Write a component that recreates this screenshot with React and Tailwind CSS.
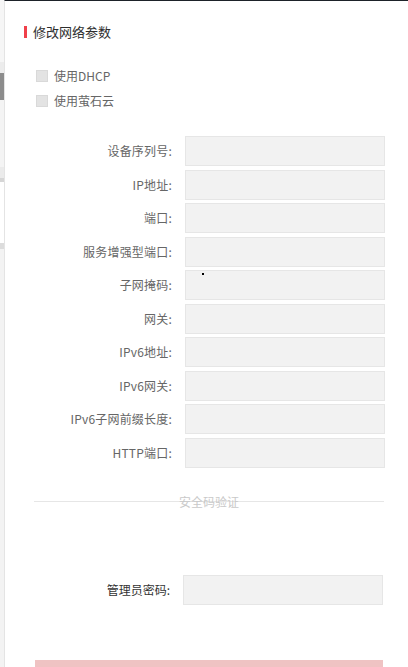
import { useState } from 'react';

const fields = [
  '设备序列号',
  'IP地址',
  '端口',
  '服务增强型端口',
  '子网掩码',
  '网关',
  'IPv6地址',
  'IPv6网关',
  'IPv6子网前缀长度',
  'HTTP端口',
];

function Check({ label, checked, onChange }) {
  return (
    <label className="flex items-center h-[24px] gap-[6px] cursor-pointer">
      <span
        onClick={onChange}
        className={`w-[12px] h-[12px] border border-[#d9d9d9] ${checked ? 'bg-[#e8363b]' : 'bg-[#e3e3e3]'}`}
      />
      <span className="text-[12px] text-[#666]">{label}</span>
    </label>
  );
}

export default function App() {
  const [dhcp, setDhcp] = useState(false);
  const [ezviz, setEzviz] = useState(false);
  const [values, setValues] = useState({});
  const [password, setPassword] = useState('');

  return (
    <div
      className="w-[408px] h-[667px] overflow-hidden flex bg-white"
      style={{ fontFamily: '"Noto Sans CJK SC", "Noto Sans", sans-serif' }}
    >
      {/* page behind the drawer */}
      <div className="w-[4px] flex flex-col shrink-0">
        <div className="h-[62px] bg-[#f6f6f6]" />
        <div className="h-[11px] bg-[#ececec]" />
        <div className="h-[27px] bg-[#8c8c8c]" />
        <div className="h-[67px] bg-[#f4f4f4]" />
        <div className="h-[11px] bg-[#ebebeb]" />
        <div className="h-[4px] bg-[#d6d6d6]" />
        <div className="h-[61px] bg-white" />
        <div className="h-[6px] bg-[#dcdcdc]" />
        <div className="flex-1 bg-[#f3f3f3]" />
      </div>

      <div className="flex-1 border-t border-[#1d2229] border-l border-l-[#e4e4e4] pt-[21px]">
        <div className="flex items-center h-[20px] pl-[19px]">
          <span className="w-[3px] h-[12px] bg-[#f0404a] mr-[6px]" />
          <h1 className="text-[13px] text-[#2e2e2e] font-normal">修改网络参数</h1>
        </div>

        <div className="mt-[22px] pl-[31px] flex flex-col gap-[1px]">
          <Check label="使用DHCP" checked={dhcp} onChange={() => setDhcp(!dhcp)} />
          <Check label="使用萤石云" checked={ezviz} onChange={() => setEzviz(!ezviz)} />
        </div>

        <div className="mt-[23px] grid grid-cols-[167px_200px] gap-x-[13px] gap-y-[3.5px] items-center">
          {fields.map((f) => (
            <div key={f} className="contents">
              <span className="text-[12px] text-[#666] text-right tracking-[0.2px]">{f}:</span>
              <div className="relative h-[30px]">
                <input
                  value={values[f] || ''}
                  onChange={(e) => setValues({ ...values, [f]: e.target.value })}
                  className="w-full h-full bg-[#f2f2f2] border border-[#e6e6e6] px-2 text-[12px] text-[#333] outline-none"
                />
                {f === '子网掩码' && (
                  <span className="absolute left-[17px] top-[3px] w-[2px] h-[2px] bg-black" />
                )}
              </div>
            </div>
          ))}
        </div>

        <div className="mt-[33px] ml-[29px] w-[350px] relative h-px bg-[#e6e6e6]">
          <span className="absolute left-1/2 -translate-x-1/2 -top-[8px] text-[12px] leading-[18px] text-[#c9c9c9] whitespace-nowrap">
            安全码验证
          </span>
        </div>

        <div className="mt-[73px] grid grid-cols-[165px_200px] gap-x-[13px] items-center">
          <span className="text-[12px] text-[#333] text-right">管理员密码:</span>
          <input
            type="password"
            value={password}
            onChange={(e) => setPassword(e.target.value)}
            className="h-[30px] bg-[#f2f2f2] border border-[#e6e6e6] px-2 text-[12px] outline-none"
          />
        </div>

        <button
          disabled
          className="block mt-[55px] ml-[30px] w-[348px] h-[40px] bg-[#efc3c3]"
        />
      </div>
    </div>
  );
}
